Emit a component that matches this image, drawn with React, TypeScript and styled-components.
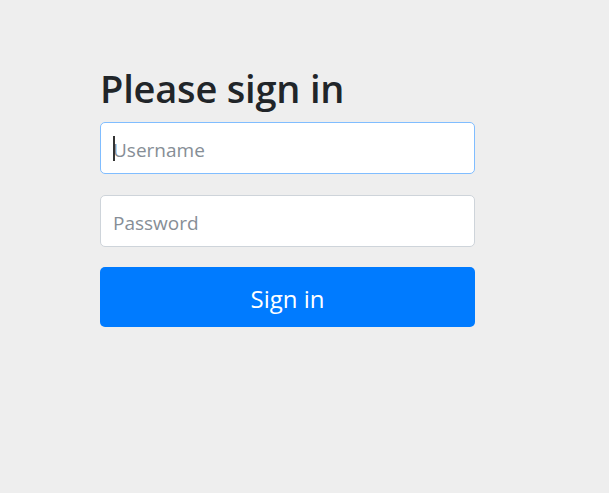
import React from "react";
import styled, { createGlobalStyle } from "styled-components";

const Global = createGlobalStyle`
  html, body { margin: 0; padding: 0; background: #eeeeee; }
  body { font-family: "Open Sans", "Noto Sans", "Liberation Sans", sans-serif; color: #212529; }
`;

const Page = styled.div`
  min-height: 493px;
  padding: 66px 0 0 100px;
  box-sizing: border-box;
`;

const Form = styled.form`
  width: 375px;
  display: flex;
  flex-direction: column;
`;

const Heading = styled.h2`
  margin: 0 0 11px 0;
  font-size: 38px;
  font-weight: 600;
  line-height: 45px;
  color: #212529;
  letter-spacing: -0.2px;
`;

const Field = styled.div<{ $gap: number }>`
  position: relative;
  margin-bottom: ${(p) => p.$gap}px;
`;

const Input = styled.input<{ $focused?: boolean }>`
  display: block;
  width: 100%;
  height: 52px;
  box-sizing: border-box;
  padding: 3px 12px 0;
  font-family: inherit;
  font-size: 19px;
  color: #495057;
  background: #ffffff;
  border: 1px solid ${(p) => (p.$focused ? "#80bdff" : "#ced4da")};
  border-radius: 5px;
  outline: none;
  &::placeholder { color: #868e96; opacity: 1; }
`;

const Caret = styled.span`
  position: absolute;
  left: 13px;
  top: 14px;
  width: 2px;
  height: 25px;
  background: #333;
`;

const Button = styled.button`
  height: 60px;
  width: 100%;
  padding: 3px 0 0;
  border: none;
  border-radius: 5px;
  background: #007bff;
  color: #ffffff;
  font-family: inherit;
  font-size: 24px;
  cursor: pointer;
`;

export default function App() {
  return (
    <>
      <Global />
      <Page>
        <Form onSubmit={(e) => e.preventDefault()}>
          <Heading>Please sign in</Heading>
          <Field $gap={21}>
            <Input $focused placeholder="Username" />
            <Caret />
          </Field>
          <Field $gap={20}>
            <Input type="password" placeholder="Password" />
          </Field>
          <Button type="submit">Sign in</Button>
        </Form>
      </Page>
    </>
  );
}
